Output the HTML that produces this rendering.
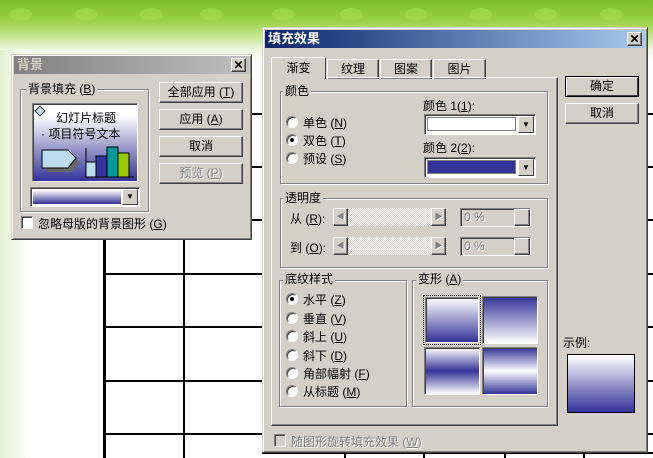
<!DOCTYPE html>
<html><head><meta charset="utf-8"><style>
*{margin:0;padding:0;box-sizing:border-box}
body{width:653px;height:458px;position:relative;overflow:hidden;background:#fff;font-family:"Liberation Sans","Noto Sans CJK SC","WenQuanYi Zen Hei",sans-serif;font-size:12px;color:#000}
.a{position:absolute}
.bg{left:0;top:0;width:653px;height:62px;background:linear-gradient(#7cbf2a 0,#9ed24a 22px,#c8e898 38px,#eef8e2 50px,#fff 62px)}
.lg{left:0;top:50px;width:32px;height:408px;background:linear-gradient(90deg,#e4f2d4,#fff)}
.paw{border-radius:50% 50% 40% 40%;background:rgba(170,220,80,.55)}
.h{height:2px;background:#000}
.v{width:2px;background:#000}
.dlg{background:#d4d0c8;border:1px solid;border-color:#d4d0c8 #404040 #404040 #d4d0c8;box-shadow:inset 1px 1px #fff,inset -1px -1px #808080}
.tb{height:18px;color:#fff;font-weight:bold;font-size:13px;line-height:18px;padding-left:3px}
.btn{background:#d4d0c8;border:1px solid;border-color:#fff #404040 #404040 #fff;box-shadow:inset -1px -1px #808080;text-align:center;line-height:18px}
.x{width:15px;height:14px;line-height:12px;font-size:12px;font-weight:bold;text-align:center}
.grp{border:1px solid #808080;box-shadow:1px 1px #fff,inset 1px 1px #fff}
.gl{background:#d4d0c8;padding:0 2px;line-height:14px}
.sunk{border:1px solid;border-color:#808080 #fff #fff #808080;box-shadow:inset 1px 1px #404040}
.rad{width:12px;height:12px;border-radius:50%;background:#fff;border:1px solid;border-color:#808080 #fff #fff #808080;box-shadow:inset 1px 1px #404040}
.dot{width:4px;height:4px;background:#000;border-radius:50%;left:3px;top:3px}
.dd{width:16px;background:#d4d0c8;border:1px solid;border-color:#fff #404040 #404040 #fff;font-size:8px;text-align:center}
.grey{color:#808080;text-shadow:1px 1px #fff}
</style></head><body>
<div class="a bg"></div><div class="a lg"></div>
<div class="a paw" style="left:10px;top:8px;width:22px;height:12px"></div>
<div class="a paw" style="left:75px;top:8px;width:22px;height:12px"></div>
<div class="a paw" style="left:140px;top:8px;width:22px;height:12px"></div>
<div class="a paw" style="left:200px;top:8px;width:22px;height:12px"></div>
<div class="a paw" style="left:272px;top:8px;width:22px;height:12px"></div>
<div class="a paw" style="left:340px;top:8px;width:22px;height:12px"></div>
<div class="a paw" style="left:405px;top:8px;width:22px;height:12px"></div>
<div class="a paw" style="left:470px;top:8px;width:22px;height:12px"></div>
<div class="a paw" style="left:535px;top:8px;width:22px;height:12px"></div>
<div class="a paw" style="left:600px;top:8px;width:22px;height:12px"></div>

<div class="a v" style="left:103px;top:236px;height:222px;width:3px"></div>
<div class="a v" style="left:183px;top:236px;height:222px"></div>
<div class="a h" style="left:104px;top:273px;width:160px"></div>
<div class="a h" style="left:104px;top:326px;width:160px"></div>
<div class="a h" style="left:104px;top:380px;width:160px"></div>
<div class="a h" style="left:104px;top:433px;width:160px"></div>
<div class="a h" style="left:248px;top:113px;width:16px"></div>
<div class="a h" style="left:248px;top:166px;width:16px"></div>
<div class="a h" style="left:248px;top:219px;width:16px"></div>
<div class="a h" style="left:645px;top:113px;width:8px"></div>
<div class="a h" style="left:645px;top:166px;width:8px"></div>
<div class="a h" style="left:645px;top:219px;width:8px"></div>
<div class="a h" style="left:645px;top:273px;width:8px"></div>
<div class="a h" style="left:645px;top:326px;width:8px"></div>
<div class="a h" style="left:645px;top:380px;width:8px"></div>
<div class="a h" style="left:645px;top:433px;width:8px"></div>
<div class="a v" style="left:344px;top:450px;height:8px"></div>
<div class="a v" style="left:423px;top:450px;height:8px"></div>
<div class="a v" style="left:504px;top:450px;height:8px"></div>
<div class="a v" style="left:583px;top:450px;height:8px"></div>
<div class="a h" style="left:262px;top:452px;width:391px"></div>

<div class="a dlg" style="left:11px;top:54px;width:241px;height:186px"></div>
<div class="a tb" style="left:14px;top:56px;width:235px;background:linear-gradient(90deg,#808080,#c0c0c0);color:#d4d0c8">背景</div>
<div class="a btn x" style="left:231px;top:58px">✕</div>
<div class="a grp" style="left:20px;top:89px;width:129px;height:123px"></div>
<div class="a gl" style="left:26px;top:82px">背景填充 (<u>B</u>)</div>
<div class="a sunk" style="left:32px;top:103px;width:106px;height:79px;background:linear-gradient(#fff,#fff 15%,#333399)"></div>
<div class="a" style="left:36px;top:107px;width:8px;height:8px;background:#bde;border:1px solid #333;transform:rotate(45deg)"></div>
<div class="a" style="left:56px;top:109px">幻灯片标题</div>
<div class="a" style="left:41px;top:125px">· 项目符号文本</div>
<svg class="a" style="left:40px;top:146px" width="95" height="32"><polygon points="4,6 30,6 38,14 30,24 4,24" fill="#666" transform="translate(2,2)"/><polygon points="2,4 28,4 36,12 28,22 2,22" fill="#bde" stroke="#000"/><path d="M46 2V31H94" stroke="#000" fill="none"/><rect x="46" y="16" width="10" height="15" fill="#bde" stroke="#000"/><rect x="56" y="10" width="11" height="21" fill="#333399" stroke="#000"/><rect x="67" y="1" width="11" height="30" fill="#099" stroke="#000"/><rect x="78" y="7" width="11" height="24" fill="#9c0" stroke="#000"/></svg>
<div class="a sunk" style="left:30px;top:187px;width:110px;height:20px;background:#fff"></div>
<div class="a" style="left:33px;top:190px;width:88px;height:14px;background:linear-gradient(#fff,#333399)"></div>
<div class="a dd" style="left:122px;top:189px;height:16px;line-height:14px">▼</div>
<div class="a btn" style="left:159px;top:82px;width:84px;height:21px">全部应用 (<u>T</u>)</div>
<div class="a btn" style="left:159px;top:109px;width:84px;height:21px">应用 (<u>A</u>)</div>
<div class="a btn" style="left:159px;top:136px;width:84px;height:21px">取消</div>
<div class="a btn grey" style="left:159px;top:163px;width:84px;height:21px">预览 (<u>P</u>)</div>
<div class="a sunk" style="left:21px;top:216px;width:12px;height:13px;background:#fff"></div>
<div class="a" style="left:38px;top:215px">忽略母版的背景图形 (<u>G</u>)</div>

<div class="a dlg" style="left:262px;top:27px;width:386px;height:426px"></div>
<div class="a tb" style="left:265px;top:30px;width:380px;background:linear-gradient(90deg,#0a246a,#a6caf0)">填充效果</div>
<div class="a btn x" style="left:627px;top:32px">✕</div>
<div class="a btn" style="left:327px;top:59px;width:52px;height:20px;border-bottom:none">纹理</div>
<div class="a btn" style="left:380px;top:59px;width:52px;height:20px;border-bottom:none">图案</div>
<div class="a btn" style="left:433px;top:59px;width:53px;height:20px;border-bottom:none">图片</div>
<div class="a" style="left:271px;top:77px;width:287px;height:349px;border:1px solid;border-color:#fff #404040 #404040 #fff;box-shadow:inset -1px -1px #808080"></div>
<div class="a" style="left:271px;top:57px;width:55px;height:22px;background:#d4d0c8;border:1px solid;border-color:#fff #404040 transparent #fff;border-bottom:none;text-align:center;line-height:20px">渐变</div>
<div class="a btn" style="left:565px;top:76px;width:74px;height:21px;border:1px solid #000;box-shadow:inset 1px 1px #fff,inset -1px -1px #404040">确定</div>
<div class="a btn" style="left:565px;top:103px;width:74px;height:21px">取消</div>

<div class="a grp" style="left:280px;top:91px;width:268px;height:93px"></div>
<div class="a gl" style="left:283px;top:84px">颜色</div>
<div class="a rad" style="left:286px;top:116px"></div><div class="a" style="left:303px;top:114px">单色 (<u>N</u>)</div>
<div class="a rad" style="left:286px;top:134px"><div class="a dot"></div></div><div class="a" style="left:303px;top:132px">双色 (<u>T</u>)</div>
<div class="a rad" style="left:286px;top:152px"></div><div class="a" style="left:303px;top:150px">预设 (<u>S</u>)</div>
<div class="a" style="left:423px;top:97px">颜色 1(<u>1</u>):</div>
<div class="a sunk" style="left:424px;top:114px;width:112px;height:21px;background:#fff"></div>
<div class="a" style="left:427px;top:117px;width:89px;height:14px;background:#fff;border:1px solid #808080"></div>
<div class="a dd" style="left:518px;top:116px;height:17px;line-height:15px">▼</div>
<div class="a" style="left:423px;top:139px">颜色 2(<u>2</u>):</div>
<div class="a sunk" style="left:424px;top:157px;width:112px;height:21px;background:#fff"></div>
<div class="a" style="left:427px;top:160px;width:89px;height:14px;background:#333399;border:1px solid #808080"></div>
<div class="a dd" style="left:518px;top:159px;height:17px;line-height:15px">▼</div>

<div class="a grp" style="left:280px;top:198px;width:268px;height:70px"></div>
<div class="a gl" style="left:283px;top:191px">透明度</div>
<div class="a" style="left:290px;top:210px">从 (<u>R</u>):</div>
<div class="a" style="left:290px;top:239px">到 (<u>O</u>):</div>
<div class="a" style="left:333px;top:208px;width:114px;height:18px;background:repeating-conic-gradient(#fff 0 25%,#d4d0c8 0 50%) 0 0/2px 2px"></div>
<div class="a btn grey" style="left:333px;top:208px;width:15px;height:18px;font-size:8px;line-height:16px">◀</div>
<div class="a btn grey" style="left:431px;top:208px;width:15px;height:18px;font-size:8px;line-height:16px">▶</div>
<div class="a" style="left:333px;top:237px;width:114px;height:18px;background:repeating-conic-gradient(#fff 0 25%,#d4d0c8 0 50%) 0 0/2px 2px"></div>
<div class="a btn grey" style="left:333px;top:237px;width:15px;height:18px;font-size:8px;line-height:16px">◀</div>
<div class="a btn grey" style="left:431px;top:237px;width:15px;height:18px;font-size:8px;line-height:16px">▶</div>
<div class="a sunk grey" style="left:460px;top:208px;width:71px;height:19px;padding-left:3px;line-height:17px">0 %</div>
<div class="a btn" style="left:514px;top:209px;width:16px;height:17px"></div>
<div class="a sunk grey" style="left:460px;top:237px;width:71px;height:19px;padding-left:3px;line-height:17px">0 %</div>
<div class="a btn" style="left:514px;top:238px;width:16px;height:17px"></div>

<div class="a grp" style="left:279px;top:280px;width:128px;height:127px"></div>
<div class="a gl" style="left:283px;top:272px">底纹样式</div>
<div class="a rad" style="left:286px;top:293px"><div class="a dot"></div></div><div class="a" style="left:303px;top:291px">水平 (<u>Z</u>)</div>
<div class="a rad" style="left:286px;top:312px"></div><div class="a" style="left:303px;top:310px">垂直 (<u>V</u>)</div>
<div class="a rad" style="left:286px;top:330px"></div><div class="a" style="left:303px;top:328px">斜上 (<u>U</u>)</div>
<div class="a rad" style="left:286px;top:349px"></div><div class="a" style="left:303px;top:347px">斜下 (<u>D</u>)</div>
<div class="a rad" style="left:286px;top:367px"></div><div class="a" style="left:303px;top:365px">角部幅射 (<u>F</u>)</div>
<div class="a rad" style="left:286px;top:385px"></div><div class="a" style="left:303px;top:383px">从标题 (<u>M</u>)</div>

<div class="a grp" style="left:412px;top:280px;width:136px;height:127px"></div>
<div class="a gl" style="left:416px;top:272px">变形 (<u>A</u>)</div>
<div class="a" style="left:423px;top:295px;width:58px;height:50px;border:1px dotted #000;padding:1px"><div class="sunk" style="width:100%;height:100%;background:linear-gradient(#fff,#333399)"></div></div>
<div class="a sunk" style="left:482px;top:296px;width:56px;height:48px;background:linear-gradient(#333399,#fff)"></div>
<div class="a sunk" style="left:424px;top:347px;width:56px;height:48px;background:linear-gradient(#fff,#333399,#fff)"></div>
<div class="a sunk" style="left:482px;top:347px;width:56px;height:48px;background:linear-gradient(#333399,#fff,#333399)"></div>

<div class="a" style="left:563px;top:334px">示例:</div>
<div class="a" style="left:567px;top:354px;width:68px;height:59px;border:1px solid #000;background:linear-gradient(#fff,#333399)"></div>

<div class="a sunk" style="left:274px;top:434px;width:12px;height:13px;background:#d4d0c8"></div>
<div class="a grey" style="left:291px;top:433px">随图形旋转填充效果 (<u>W</u>)</div>
</body></html>
